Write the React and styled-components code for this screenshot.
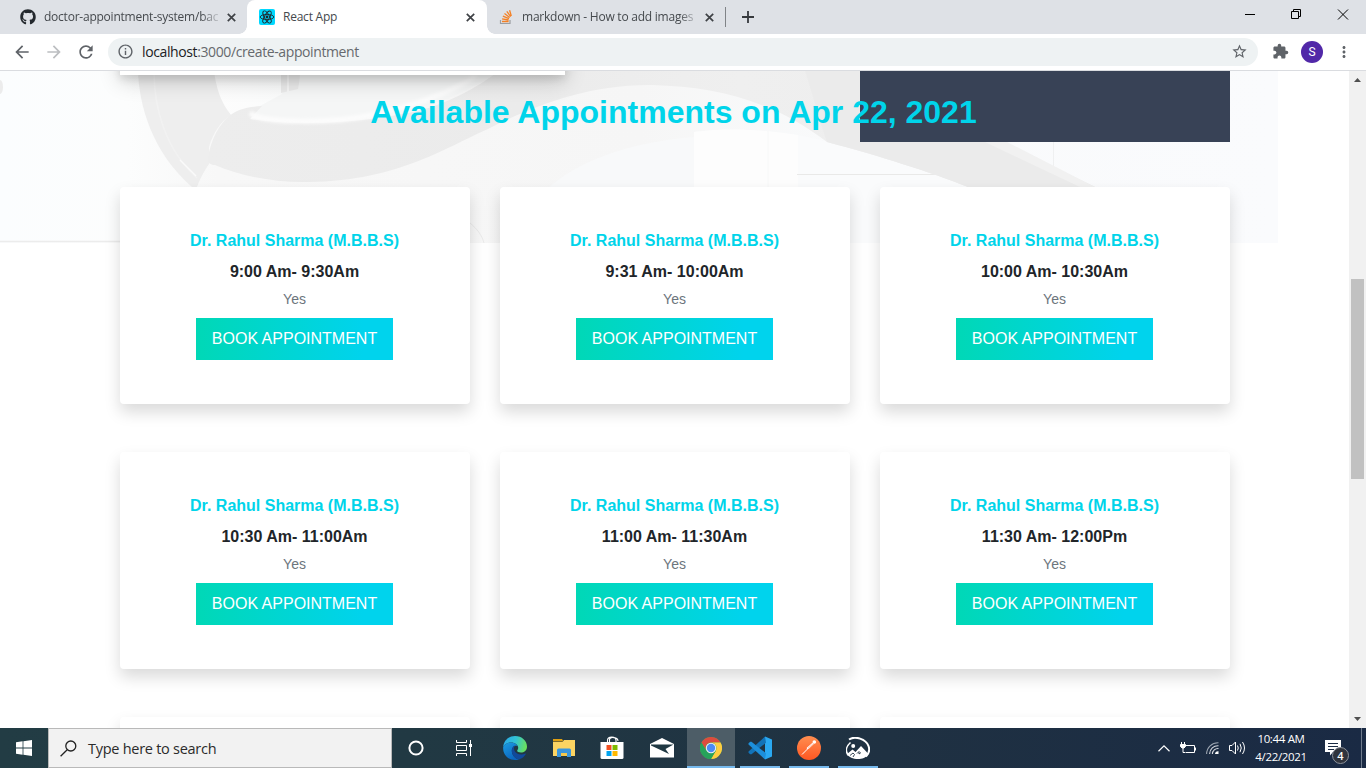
import React from "react";
import styled, { createGlobalStyle } from "styled-components";
import { FaGithub } from "react-icons/fa";
import {
  MdArrowBack,
  MdArrowForward,
  MdRefresh,
  MdInfoOutline,
  MdStarBorder,
  MdExtension,
  MdMoreVert,
} from "react-icons/md";

const Global = createGlobalStyle`
  * { box-sizing: border-box; }
  html, body { margin: 0; padding: 0; }
  body { overflow: hidden; background: #fff; font-family: "Open Sans", "Noto Sans", sans-serif; }
  svg { display: block; flex: none; }
`;

const Desktop = styled.div`
  width: 1366px;
  height: 768px;
  display: flex;
  flex-direction: column;
  overflow: hidden;
`;

/* ---------- browser chrome ---------- */

const TabStrip = styled.div`
  height: 34px;
  flex: none;
  display: flex;
  background: #dee1e6;
`;

const Tab = styled.div`
  position: relative;
  width: ${(p) => p.$width}px;
  height: 34px;
  display: flex;
  align-items: center;
  padding: 0 ${(p) => p.$right}px 0 ${(p) => p.$left}px;
  gap: ${(p) => p.$gap || 8}px;
  color: #45494d;
  background: ${(p) => (p.$active ? "#fff" : "transparent")};
  border-radius: 8px 8px 0 0;
  ${(p) =>
    p.$active &&
    `
    &::before, &::after {
      content: "";
      position: absolute;
      bottom: 0;
      width: 8px;
      height: 8px;
    }
    &::before { left: -8px; background: radial-gradient(circle at 0 0, transparent 7.5px, #fff 8px); }
    &::after { right: -8px; background: radial-gradient(circle at 100% 0, transparent 7.5px, #fff 8px); }
  `}
`;

const TabTitle = styled.span`
  flex: 1;
  min-width: 0;
  white-space: nowrap;
  font-size: 12px;
  line-height: 16px;
  letter-spacing: -0.23px;
  ${(p) =>
    p.$fade &&
    `mask-image: linear-gradient(to right, #000 calc(100% - 18px), rgba(0, 0, 0, 0.15));`}
`;

const TabDivider = styled.span`
  width: 1px;
  height: 20px;
  margin: 7px 0 0 0;
  background: #808387;
`;

const NewTab = styled.div`
  display: flex;
  align-items: center;
  padding-left: 16px;
`;

const WindowButtons = styled.div`
  margin-left: auto;
  height: 28px;
  display: flex;
  align-items: center;
  gap: 35px;
  padding-right: 17px;
`;

const Toolbar = styled.div`
  height: 37px;
  flex: none;
  display: flex;
  align-items: center;
  padding: 0 12px 1px 12px;
  background: #fff;
  border-bottom: 1px solid #dadce0;
  color: #5f6368;
`;

const NavButtons = styled.div`
  width: 96px;
  display: flex;
  gap: 12px;
`;

const AddressBar = styled.div`
  width: 1150px;
  height: 28px;
  display: flex;
  align-items: center;
  padding: 0 10px 0 9px;
  gap: 8px;
  border-radius: 14px;
  background: #eef2f3;
`;

const Url = styled.span`
  flex: 1;
  font-size: 14px;
  line-height: 20px;
  letter-spacing: -0.39px;
  color: #66696d;
  b { font-weight: 400; color: #202124; }
`;

const ToolbarActions = styled.div`
  margin-left: auto;
  display: flex;
  align-items: center;
  gap: 12px;
  padding-right: 1px;
`;

const Avatar = styled.span`
  width: 22px;
  height: 22px;
  border-radius: 50%;
  background: #5128a8;
  color: #fff;
  font: 12px/22px Roboto, sans-serif;
  text-align: center;
`;

/* ---------- page ---------- */

const Viewport = styled.div`
  height: 657px;
  flex: none;
  display: flex;
  overflow: hidden;
`;

const Page = styled.main`
  position: relative;
  flex: 1;
  overflow: hidden;
  background: #fff;
  font-family: "Liberation Sans", Arial, sans-serif;
`;

const Backdrop = styled.div`
  position: absolute;
  top: 0;
  left: 0;
`;

const CalendarCard = styled.div`
  position: absolute;
  top: -96px;
  left: 120px;
  width: 445px;
  height: 100px;
  background: #fff;
  box-shadow: 0 4px 8px rgba(0, 0, 0, 0.1), 0 6px 20px rgba(0, 0, 0, 0.19);
`;

const DarkPanel = styled.div`
  position: absolute;
  top: 0;
  left: 860px;
  width: 370px;
  height: 71px;
  background: #384256;
`;

const Content = styled.section`
  position: relative;
  width: 1110px;
  margin: 0 auto 0 120px;
`;

const Heading = styled.h2`
  margin: 0;
  padding: 22px 3px 0 0;
  height: 116px;
  font-size: 32px;
  line-height: 38px;
  font-weight: 700;
  text-align: center;
  color: #00d4ea;
`;

const CardGrid = styled.div`
  display: grid;
  grid-template-columns: repeat(3, 350px);
  column-gap: 30px;
  row-gap: 48px;
`;

const Card = styled.article`
  height: 217px;
  display: flex;
  flex-direction: column;
  align-items: center;
  padding: 44px 1px 0 0;
  background: #fff;
  border-radius: 4px;
  box-shadow: 0 8px 16px rgba(0, 0, 0, 0.15);
`;

const Doctor = styled.h5`
  margin: 0 0 12px;
  font-size: 16px;
  line-height: 19px;
  font-weight: 700;
  color: #00d4ea;
`;

const Slot = styled.h6`
  margin: 0 0 8px;
  font-size: 16px;
  line-height: 19px;
  font-weight: 700;
  color: #212529;
`;

const Space = styled.p`
  margin: 0 0 8px;
  font-size: 14px;
  line-height: 21px;
  color: #6c757d;
`;

const BookButton = styled.button`
  width: 197px;
  height: 42px;
  margin-right: 1px;
  padding: 0 0 1px 1px;
  border: 0;
  background: linear-gradient(to right, #00d8b6, #00d3ed 85%);
  color: #fff;
  font: 16px/24px "Liberation Sans", Arial, sans-serif;
  text-transform: uppercase;
  white-space: nowrap;
`;

const Scrollbar = styled.div`
  width: 17px;
  display: flex;
  flex-direction: column;
  align-items: center;
  justify-content: space-between;
  padding: 6px 0;
  background: #f1f1f1;
`;

const Thumb = styled.div`
  width: 13px;
  height: 200px;
  margin-top: -42px;
  background: #c1c1c1;
`;

/* ---------- taskbar ---------- */

const Taskbar = styled.footer`
  height: 40px;
  flex: none;
  display: flex;
  background: linear-gradient(to right, #223c44, #213943 30%, #1f3142 65%, #1a2a44);
`;

const StartButton = styled.div`
  width: 48px;
  padding: 12px 0 0 16px;
`;

const SearchBox = styled.div`
  width: 344px;
  height: 40px;
  display: flex;
  align-items: center;
  gap: 11px;
  padding-left: 11px;
  background: #f2f2f2;
  border: 1px solid #b9b9b9;
  color: #2b2b2b;
  font-size: 14.5px;
  letter-spacing: -0.27px;
`;

const TaskItem = styled.div`
  width: ${(p) => p.$width || 49}px;
  height: 40px;
  display: flex;
  align-items: center;
  justify-content: center;
  background: ${(p) => (p.$focused ? "#4d5d67" : "transparent")};
  box-shadow: ${(p) => (p.$focused ? "inset 0 -2px #76b9ed" : "none")};
`;

const OpenItem = styled.div`
  width: 40px;
  height: 40px;
  margin-left: ${(p) => p.$before || 9}px;
  display: flex;
  align-items: center;
  justify-content: center;
  box-shadow: inset 0 -2px #76b9ed;
`;

const Tray = styled.div`
  margin-left: auto;
  display: flex;
  align-items: center;
  color: #fff;
`;

const TrayIcons = styled.div`
  display: flex;
  align-items: center;
  gap: 10px;
`;

const Clock = styled.div`
  width: 66px;
  margin-left: 2px;
  padding-bottom: 1px;
  font-size: 11.5px;
  line-height: 18px;
  letter-spacing: -0.35px;
  text-align: center;
  white-space: nowrap;
`;

const Notifications = styled.div`
  position: relative;
  width: 48px;
  height: 40px;
  padding: 12px 0 0 11px;
  border-right: 1px solid #6f7b8c;
  margin-right: 4px;
`;

const Badge = styled.span`
  position: absolute;
  left: 18px;
  top: 19px;
  width: 17px;
  height: 17px;
  border: 1px solid #8d929b;
  border-radius: 50%;
  background: #30343d;
  font-size: 11px;
  font-weight: 600;
  line-height: 15px;
  text-align: center;
`;

/* ---------- drawings ---------- */

const CloseIcon = () => (
  <svg width="9" height="9" viewBox="0 0 9 9">
    <path d="M0.8 0.8L8.2 8.2M8.2 0.8L0.8 8.2" stroke="#3f4246" strokeWidth="1.7" />
  </svg>
);

const ReactFavicon = () => (
  <svg width="16" height="16" viewBox="0 0 16 16">
    <rect width="16" height="16" rx="2" fill="#00d8ff" />
    <g fill="none" stroke="#20262c" strokeWidth="0.9">
      <ellipse cx="8" cy="8" rx="6.8" ry="2.6" />
      <ellipse cx="8" cy="8" rx="6.8" ry="2.6" transform="rotate(60 8 8)" />
      <ellipse cx="8" cy="8" rx="6.8" ry="2.6" transform="rotate(120 8 8)" />
    </g>
    <circle cx="8" cy="8" r="1.4" fill="#20262c" />
  </svg>
);

const StackFavicon = () => (
  <svg width="16" height="16" viewBox="0 0 16 16">
    <path d="M2.500 11v3.500h9.500V11" fill="none" stroke="#9a9da1" strokeWidth="1.2" />
    <g stroke="#f48024" strokeWidth="1.3">
      <path d="M4 12.500h6.600M4.100 9.900l6.500 1.100M4.900 7.200l6.100 2.500M6.500 4.600l5.200 3.900M8.800 2.400l3.900 5.200M11.600 1.200l1.700 5.800" />
    </g>
  </svg>
);

const PageBackdrop = () => (
  <svg width="1278" height="172" viewBox="0 71 1278 172">
    <defs>
      <linearGradient id="wall" x1="0" x2="1">
        <stop offset="0" stopColor="#fbfdfe" />
        <stop offset="0.1" stopColor="#fcfdfd" />
        <stop offset="0.17" stopColor="#f8f8f8" />
        <stop offset="0.5" stopColor="#f6f6f6" />
        <stop offset="0.65" stopColor="#f9fafb" />
        <stop offset="1" stopColor="#fafbfd" />
      </linearGradient>
      <linearGradient id="seat" x1="0" x2="1">
        <stop offset="0" stopColor="#ededed" />
        <stop offset="0.35" stopColor="#ebebeb" />
        <stop offset="0.6" stopColor="#efefef" />
        <stop offset="1" stopColor="#ececec" />
      </linearGradient>
      <linearGradient id="cushion" x1="0" x2="1">
        <stop offset="0" stopColor="#fdfdfd" />
        <stop offset="0.25" stopColor="#fafbfb" />
        <stop offset="1" stopColor="#f3f4f4" />
      </linearGradient>
      <filter id="soft" x="-5%" y="-50%" width="110%" height="200%">
        <feGaussianBlur stdDeviation="1.6" />
      </filter>
    </defs>
    <rect y="71" width="1278" height="172" fill="url(#wall)" />
    <ellipse cx="0" cy="87" rx="3" ry="7" fill="#ececec" />
    <path d="M0 241.500H120" stroke="#ececec" strokeWidth="1.500" />
    <path d="M214 71H499C470 90 440 104 400 112C340 124 280 124 231 115C221 103 216 88 214 71Z" fill="url(#cushion)" />
    <path d="M282 94C286 82 296 76 308 71H499C470 90 440 104 400 112C340 124 280 124 245 114Z" fill="#f5f6f6" />
    <path d="M549 187C575 165 620 143 694 137V187Z" fill="#f8f9fa" />
    <path d="M694 243V132C718 127 790 130 827 142C880 156 930 172 968 187V243Z" fill="#fafbfc" />
    <path d="M694 132C730 127 765 130 798 135V187H694Z" fill="#fdfdfd" />
    <path d="M768 131V187" stroke="#f7f8f8" />
    <path d="M797 174.500H940" stroke="#e9e9e8" />
    <path d="M1053.500 142V167" stroke="#eff0f1" />
    <path d="M138 71C139 105 152 152 192 187H197C201 176 205 170 209 164V147C213 133 221 121 231 115C221 103 216 88 214 71Z" fill="#eeeeee" />
    <path d="M154 71C154 108 165 149 197 178" fill="none" stroke="#f2f2f2" strokeWidth="1.500" />
    <path d="M180 160L196 176" stroke="#fafafa" strokeWidth="1.500" />
    <path
      d="M499 71C475 89 448 103 418 111C360 124 295 126 250 119L262 106C245 107 237 110 229 116C220 124 211 138 208 158C208 163 210 165 215 165C240 176 275 183 309 182C400 181 450 145 490 128C530 108 585 84 653 85C715 87 770 99 827 142C880 156 930 172 968 187L1095 187C1050 166 1005 142 960 120L860 71Z"
      fill="url(#seat)"
    />
    <path d="M805 71C812 92 819 119 827 142C880 156 930 172 968 187H1095C1050 166 1005 142 960 120L860 71Z" fill="#ebebeb" />
    <path d="M1007 142L1095 187H1080L985 142Z" fill="#f1f1f1" />
    <path d="M250 113C263 124 335 123 372 115C420 105 450 92 476 76" fill="none" stroke="#fcfcfc" strokeWidth="5" filter="url(#soft)" />
    <path d="M281 71V93L298 89C299 84 300 78 300 71Z" fill="#ebebeb" />
    <path d="M288 71V92" stroke="#f6f6f6" strokeWidth="2" />
    <path d="M470 223C477 229 482 235 484 243" fill="none" stroke="#eaeaea" />
  </svg>
);

const StartIcon = () => (
  <svg width="16" height="16" viewBox="0 0 16 16" fill="#fff">
    <path d="M0 2.200L6.600 1.300V7.600H0ZM7.400 1.200L16 0V7.600H7.400ZM0 8.400H6.600V14.700L0 13.800ZM7.400 8.400H16V16L7.400 14.800Z" />
  </svg>
);

const SearchIcon = () => (
  <svg width="17" height="17" viewBox="0 0 17 17" fill="none" stroke="#222" strokeWidth="1.300">
    <circle cx="10.800" cy="6" r="5" />
    <path d="M7.200 9.700L0.600 16.200" />
  </svg>
);

const TaskViewIcon = () => (
  <svg width="17" height="16" viewBox="0 0 17 16" fill="none" stroke="#fff">
    <path d="M0.500 0V2.500H10.500V0M0.500 16V13.500H10.500V16M0.500 5.500H10.500V10.500H0.500ZM14.500 0V16" />
    <path d="M13 4H16V7H13Z" fill="#fff" stroke="none" />
  </svg>
);

const EdgeIcon = () => (
  <svg width="24" height="24" viewBox="0 0 24 24">
    <defs>
      <linearGradient id="edgeTop" x1="0" y1="0.3" x2="1" y2="0.5">
        <stop offset="0" stopColor="#2aa8e8" />
        <stop offset="0.5" stopColor="#32c3d4" />
        <stop offset="1" stopColor="#6be05a" />
      </linearGradient>
      <linearGradient id="edgeBody" x1="0" y1="0" x2="0.6" y2="1">
        <stop offset="0" stopColor="#1b9de2" />
        <stop offset="1" stopColor="#0b63bd" />
      </linearGradient>
    </defs>
    <path d="M0.200 11C0.700 4.500 6 0 12 0C19 0 24 5 24 10.500C24 14.500 21 16.500 18 16.500C15.500 16.500 14 15.500 14.200 14.600C14.400 14 15.200 13.400 15.200 11.800C15.200 9 12 6.500 8 6.500C4.500 6.500 1.500 8.300 0.200 11Z" fill="url(#edgeTop)" />
    <path d="M0.200 11C1.500 8.300 4.500 6.500 8 6.500C11 6.500 13.500 8 14.500 10C11.500 9 8.800 11.500 8.800 14.800C8.800 19.500 13 24 17 23C15.500 23.700 14 24 12 24C5 24-0.500 18 0.200 11Z" fill="url(#edgeBody)" />
    <path d="M8.800 14.800C8.800 12 10.200 10 12 9.600C10.800 11 10.800 12.800 11.400 14.400C12.800 18 18 19.800 22.300 17.600C22.700 17.400 23 17.800 22.700 18.200C21.300 20.500 19.500 22 17 23C13 24 8.800 19.500 8.800 14.800Z" fill="#11499a" />
  </svg>
);

const ExplorerIcon = () => (
  <svg width="22" height="18" viewBox="0 0 22 18">
    <path d="M0 0H9L10.500 2.500H0Z" fill="#e0a012" />
    <path d="M0 3H9.500L11 1H22V17H0Z" fill="#fcd462" />
    <path d="M4 18V11Q4 9.500 5.500 9.500H16.500Q18 9.500 18 11V18H14V14H8V18Z" fill="#3a96dd" />
    <path d="M8 14H14V17H8Z" fill="#f5c84d" />
  </svg>
);

const StoreIcon = () => (
  <svg width="24" height="24" viewBox="0 0 24 24">
    <path d="M7.500 6V4.500C7.500 0 16 0 16 4.500V6M9.500 6V3.500C10 0.500 18 1 18 5" fill="none" stroke="#fff" strokeWidth="1.100" />
    <path d="M0.500 6H23.500V21.500Q23.500 23 22 23H2Q0.500 23 0.500 21.500Z" fill="#fff" />
    <path d="M6.500 9H11.500V14H6.500Z" fill="#f25022" />
    <path d="M12.500 9H17.500V14H12.500Z" fill="#7fba00" />
    <path d="M6.500 15H11.500V20H6.500Z" fill="#00a4ef" />
    <path d="M12.500 15H17.500V20H12.500Z" fill="#ffb900" />
  </svg>
);

const MailIcon = () => (
  <svg width="24" height="20" viewBox="0 0 24 20">
    <path d="M0 6L12 0L24 6V19.500H0Z" fill="#fff" />
    <path d="M1 6.500H23.500L15.500 11L19 16L1 7.500Z" fill="#1f3843" />
  </svg>
);

const ChromeIcon = () => (
  <svg width="22" height="22" viewBox="0 0 22 22">
    <circle cx="11" cy="11" r="11" fill="#4caf50" />
    <path d="M1.470 5.500A11 11 0 0 1 20.530 5.500H11A5.500 5.500 0 0 0 6.240 13.750Z" fill="#dd4b3e" />
    <path d="M20.530 5.500A11 11 0 0 1 11 22L15.760 13.750A5.500 5.500 0 0 0 11 5.500Z" fill="#ffcd41" />
    <path d="M1.470 5.500A11 11 0 0 0 11 22L15.760 13.750H6.240Z" fill="#26a35b" />
    <circle cx="11" cy="11" r="5.200" fill="#f1f1f1" />
    <circle cx="11" cy="11" r="4.200" fill="#4c8bf5" />
  </svg>
);

const CodeIcon = () => (
  <svg width="24" height="24" viewBox="0 0 24 24">
    <path d="M17 0.500L24 3.500V20.500L17 23.500Z" fill="#2aa9f2" />
    <path d="M17 0.500L0.500 15.500L0.500 16.800L2.200 18.200L3.500 18.200L18 6.800Z" fill="#1273b8" />
    <path d="M17 23.500L0.500 8.500V7.200L2.200 5.800H3.500L18 17.200Z" fill="#1d8fda" />
  </svg>
);

const PostmanIcon = () => (
  <svg width="24" height="24" viewBox="0 0 24 24">
    <defs>
      <linearGradient id="postman" x1="0" y1="0" x2="0" y2="1">
        <stop offset="0" stopColor="#ff8e50" />
        <stop offset="1" stopColor="#ff5722" />
      </linearGradient>
    </defs>
    <circle cx="12" cy="12" r="12" fill="url(#postman)" />
    <path d="M5 18.500L12 11.500" stroke="#fff" strokeWidth="1" />
    <path d="M10 13.300L9.800 11.800L15.500 6.800L16.800 8L12 12.600Z" fill="#fff" />
    <circle cx="17.300" cy="6" r="1.800" fill="#fff" />
    <path d="M11 12.300L15.800 8" stroke="#ff9b78" strokeWidth="0.700" />
  </svg>
);

const PhotoIcon = () => (
  <svg width="24" height="22" viewBox="0 0 24 22">
    <path d="M3 2.500C9-1.500 20 2 22.500 9C24 13 22.500 17 20 19.500" fill="none" stroke="#fff" strokeWidth="2" />
    <path d="M4.500 5.500C-0.500 10-0.500 15 2.500 18.500" fill="none" stroke="#fff" strokeWidth="1.600" />
    <circle cx="7.200" cy="9" r="2" fill="#fff" />
    <path d="M1 17L6.500 12.500L9.500 15L15 9L22.500 17C20 21 16 22 12 22C7 22 3 20.500 1 17Z" fill="#fff" />
    <path d="M4 18.500L7 16L8.500 17.500L7 20M11 16.500L13 14.500V17L15 15.500" fill="none" stroke="#1f3142" strokeWidth="0.900" />
  </svg>
);

const ChevronUp = () => (
  <svg width="12" height="7" viewBox="0 0 12 7">
    <path d="M0.500 6.300L6 0.900L11.500 6.300" fill="none" stroke="#fff" strokeWidth="1.200" />
  </svg>
);

const BatteryIcon = () => (
  <svg width="16" height="13" viewBox="0 0 16 13" fill="none" stroke="#fff">
    <path d="M6 3.500H14.500V10.500H5.500M15.500 5.500V8.500M1.500 0V2.500M4.500 0V2.500M3 6V10.500H5" />
    <path d="M0.500 2.500H5.500V4.500L4 6H2L0.500 4.500Z" fill="#fff" />
  </svg>
);

const WifiIcon = () => (
  <svg width="13" height="12" viewBox="0 0 13 12" fill="none" strokeWidth="1.100">
    <path d="M0.600 12A11.400 11.400 0 0 1 12.500 0.700" stroke="#9aa4b0" />
    <path d="M3.600 12A8.400 8.400 0 0 1 12.500 3.700M6.400 12A5.600 5.600 0 0 1 12.500 6.500" stroke="#d5d9df" />
    <path d="M9 12A3 3 0 0 1 12.500 9.200V12Z" fill="#fff" />
  </svg>
);

const SpeakerIcon = () => (
  <svg width="17" height="14" viewBox="0 0 17 14" fill="none" stroke="#fff" strokeWidth="1">
    <path d="M0.500 4.500H3L6.500 1V13L3 9.500H0.500ZM8.500 4.500Q10 7 8.500 9.500M11 2.800Q13.500 7 11 11.200M13.500 1Q17.500 7 13.500 13" />
  </svg>
);

const MessageIcon = () => (
  <svg width="16" height="16" viewBox="0 0 16 16">
    <path d="M0 0H16V12H8L5 15.500V12H0Z" fill="#fff" />
    <path d="M3 3.500H13M3 6.500H13M3 9.500H9" stroke="#1b2b44" />
  </svg>
);

const SLOTS = [
  "9:00 Am- 9:30Am",
  "9:31 Am- 10:00Am",
  "10:00 Am- 10:30Am",
  "10:30 Am- 11:00Am",
  "11:00 Am- 11:30Am",
  "11:30 Am- 12:00Pm",
];

const AppointmentCard = ({ time }) => (
  <Card>
    <Doctor>Dr. Rahul Sharma (M.B.B.S)</Doctor>
    <Slot>{time}</Slot>
    <Space>Yes</Space>
    <BookButton>Book Appointment</BookButton>
  </Card>
);

export default function App() {
  return (
    <Desktop>
      <Global />
      <TabStrip>
        <Tab $width={247} $left={20} $right={11}>
          <FaGithub size={16} color="#24292e" />
          <TabTitle $fade>doctor-appointment-system/bac</TabTitle>
          <CloseIcon />
        </Tab>
        <Tab $width={240} $left={12} $right={12} $active>
          <ReactFavicon />
          <TabTitle>React App</TabTitle>
          <CloseIcon />
        </Tab>
        <Tab $width={238} $left={11} $right={11} $gap={8}>
          <StackFavicon />
          <TabTitle $fade>markdown - How to add images</TabTitle>
          <CloseIcon />
        </Tab>
        <TabDivider />
        <NewTab>
          <svg width="12" height="12" viewBox="0 0 12 12">
            <path d="M6 0V12M0 6H12" stroke="#36393d" strokeWidth="1.800" />
          </svg>
        </NewTab>
        <WindowButtons>
          <svg width="11" height="11" viewBox="0 0 11 11">
            <path d="M0 5.500H10" stroke="#000" />
          </svg>
          <svg width="11" height="11" viewBox="0 0 11 11" fill="none" stroke="#000">
            <path d="M0.500 2.500H7.500V9.500H0.500ZM2.500 2.500V0.500H9.500V7.500H7.500" />
          </svg>
          <svg width="12" height="11" viewBox="0 0 12 11">
            <path d="M1 0.500L11 10.500M11 0.500L1 10.500" stroke="#000" />
          </svg>
        </WindowButtons>
      </TabStrip>
      <Toolbar>
        <NavButtons>
          <MdArrowBack size={20} />
          <MdArrowForward size={20} color="#bcbec1" />
          <MdRefresh size={20} />
        </NavButtons>
        <AddressBar>
          <MdInfoOutline size={17} />
          <Url>
            <b>localhost</b>:3000/create-appointment
          </Url>
          <MdStarBorder size={17} />
        </AddressBar>
        <ToolbarActions>
          <MdExtension size={17} />
          <Avatar>S</Avatar>
          <MdMoreVert size={18} />
        </ToolbarActions>
      </Toolbar>

      <Viewport>
        <Page>
          <Backdrop>
            <PageBackdrop />
          </Backdrop>
          <CalendarCard />
          <DarkPanel />
          <Content>
            <Heading>Available Appointments on Apr 22, 2021</Heading>
            <CardGrid>
              {SLOTS.map((time) => (
                <AppointmentCard key={time} time={time} />
              ))}
              <Card />
              <Card />
              <Card />
            </CardGrid>
          </Content>
        </Page>
        <Scrollbar>
          <svg width="7" height="5" viewBox="0 0 7 5">
            <path d="M0 5L3.500 1L7 5Z" fill="#505050" />
          </svg>
          <Thumb />
          <svg width="7" height="5" viewBox="0 0 7 5">
            <path d="M0 0L3.500 4L7 0Z" fill="#505050" />
          </svg>
        </Scrollbar>
      </Viewport>

      <Taskbar>
        <StartButton>
          <StartIcon />
        </StartButton>
        <SearchBox>
          <SearchIcon />
          Type here to search
        </SearchBox>
        <TaskItem $width={48}>
          <svg width="16" height="16" viewBox="0 0 16 16">
            <circle cx="8" cy="8" r="6.600" fill="none" stroke="#fff" strokeWidth="2" />
          </svg>
        </TaskItem>
        <TaskItem><TaskViewIcon /></TaskItem>
        <TaskItem $width={51}><EdgeIcon /></TaskItem>
        <TaskItem $width={48}><ExplorerIcon /></TaskItem>
        <TaskItem $width={48}><StoreIcon /></TaskItem>
        <TaskItem $width={51}><MailIcon /></TaskItem>
        <TaskItem $width={48} $focused><ChromeIcon /></TaskItem>
        <OpenItem $before={5}><CodeIcon /></OpenItem>
        <OpenItem><PostmanIcon /></OpenItem>
        <OpenItem><PhotoIcon /></OpenItem>
        <Tray>
          <TrayIcons>
            <ChevronUp />
            <BatteryIcon />
            <WifiIcon />
            <SpeakerIcon />
          </TrayIcons>
          <Clock>
            10:44 AM
            <br />
            4/22/2021
          </Clock>
          <Notifications>
            <MessageIcon />
            <Badge>4</Badge>
          </Notifications>
        </Tray>
      </Taskbar>
    </Desktop>
  );
}
